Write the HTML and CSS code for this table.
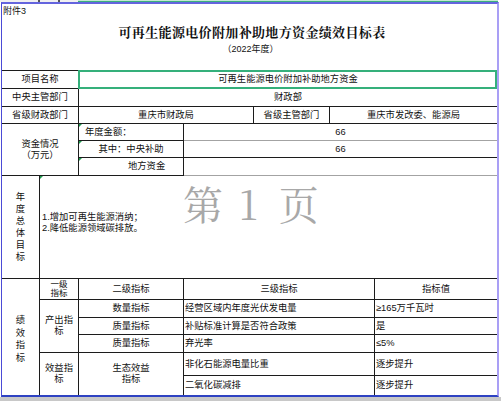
FILE: index.html
```html
<!DOCTYPE html>
<html lang="zh-CN">
<head>
<meta charset="utf-8">
<title>可再生能源电价附加补助地方资金绩效目标表</title>
<link rel="stylesheet" href="styles.css">
</head>
<body>
<div class="topbar">
  <div class="tb-left"><span class="tick t1"></span><span class="tick t2"></span></div>
  <div class="tb-right"></div>
</div>
<div class="frame">
  <div class="head">
    <div class="note">附件3</div>
    <div class="title">可再生能源电价附加补助地方资金绩效目标表</div>
    <div class="year">（2022年度）</div>
  </div>
  <div class="grid">
    <div class="c s2">项目名称</div>
    <div class="c s5 sel">可再生能源电价附加补助地方资金</div>

    <div class="c s2">中央主管部门</div>
    <div class="c s5">财政部</div>

    <div class="c s2">省级财政部门</div>
    <div class="c s2">重庆市财政局</div>
    <div class="c">省级主管部门</div>
    <div class="c s2">重庆市发改委、能源局</div>

    <div class="c s2 r3 two">资金情况<br>（万元）</div>
    <div class="c l tri amt">年度金额：</div>
    <div class="c s4 gb">66</div>
    <div class="c tri">其中：中央补助</div>
    <div class="c s4">66</div>
    <div class="c l tri local">地方资金</div>
    <div class="c s4 gb"></div>

    <div class="c"><span class="stack">年度总体目标</span></div>
    <div class="c s6 goal tri">
      <div class="goal-text">1.增加可再生能源消纳；<br>2.降低能源领域碳排放。</div>
      <div class="wm">第<span class="one">1</span>页</div>
    </div>

    <div class="c r6"><span class="stack perf">绩效指标</span></div>
    <div class="c small">一级<br>指标</div>
    <div class="c">二级指标</div>
    <div class="c s3">三级指标</div>
    <div class="c">指标值</div>

    <div class="c r3 two">产出指<br>标</div>
    <div class="c">数量指标</div>
    <div class="c s3 l">经营区域内年度光伏发电量</div>
    <div class="c l">≥165万千瓦时</div>

    <div class="c">质量指标</div>
    <div class="c s3 l">补贴标准计算是否符合政策</div>
    <div class="c l">是</div>

    <div class="c">质量指标</div>
    <div class="c s3 l">弃光率</div>
    <div class="c l">≤5%</div>

    <div class="c r2 two">效益指<br>标</div>
    <div class="c r2 two">生态效益<br>指标</div>
    <div class="c s3 l">非化石能源电量比重</div>
    <div class="c l">逐步提升</div>

    <div class="c s3 l">二氧化碳减排</div>
    <div class="c l">逐步提升</div>
  </div>
</div>
<div class="status"></div>
</body>
</html>
```
FILE: styles.css
```css
html, body {
  margin: 0;
  padding: 0;
  background: #ffffff;
}
body {
  width: 501px;
  height: 401px;
  overflow: hidden;
  font-family: "Liberation Sans", "Noto Sans CJK SC", sans-serif;
  font-size: 9.3px;
  color: #111111;
}

/* top column-header strip */
.topbar {
  display: flex;
  height: 2px;
}
.tb-left {
  width: 78px;
  background: #f0f0f0;
  display: flex;
}
.tick {
  width: 2px;
  height: 2px;
  background: #555555;
}
.t1 { margin-left: 38px; }
.t2 { margin-left: 18px; }
.tb-right {
  width: 420px;
  border-top: 1px solid #c4e8d4;
  background: #3cb07c;
  height: 1px;
}

/* sheet frame */
.frame {
  margin-left: 1px;
  width: 495px;
  border-left: 1px solid #4b4bd6;
  border-right: 2px solid #a99ff5;
  border-top: 2px solid #6464de;
  border-bottom: 2px solid #2e42c2;
}

.head {
  height: 66px;
}
.note {
  font-size: 9px;
  line-height: 14px;
  padding-left: 1px;
}
.title {
  margin-top: 5px;
  line-height: 18px;
  font-size: 13px;
  font-weight: bold;
  letter-spacing: 0.35px;
  text-align: center;
  padding-left: 5px;
  font-family: "Noto Serif CJK SC", "Noto Sans CJK SC", serif;
}
.year {
  margin-top: 2px;
  line-height: 12px;
  font-size: 9px;
  text-align: center;
  padding-left: 2px;
}

/* table grid */
.grid {
  display: grid;
  grid-template-columns: 37px 38px 104px 69px 75px 44px 122px;
  grid-template-rows: 17px 17px 16px 16px 16px 17px 102px 20px 17px 16px 17px 22px 19px;
  gap: 1px;
  padding-top: 1px;
  background: #1c1c1c;
}
.c {
  background: #ffffff;
  display: flex;
  align-items: center;
  justify-content: center;
  text-align: center;
  white-space: nowrap;
  line-height: 11px;
  overflow: visible;
}
.s2 { grid-column: span 2; }
.s3 { grid-column: span 3; }
.s4 { grid-column: span 4; }
.s5 { grid-column: span 5; }
.s6 { grid-column: span 6; }
.r2 { grid-row: span 2; }
.r3 { grid-row: span 3; }
.r6 { grid-row: span 6; }

.l {
  justify-content: flex-start;
  text-align: left;
  padding-left: 1px;
}
.amt { padding-left: 6px; }
.local { padding-left: 49px; }
.two { line-height: 11px; }
.small {
  font-size: 8.5px;
  line-height: 9px;
}
.gb { box-shadow: 0 1px 0 #a3a3a3; }

.stack {
  display: block;
  width: 1em;
  white-space: normal;
  word-break: break-all;
  line-height: 12px;
}
.perf {
  line-height: 12.5px;
  padding-top: 4px;
}

/* selection box */
.sel { position: relative; }
.sel::after {
  content: "";
  position: absolute;
  left: -1px;
  top: -1px;
  right: 0;
  bottom: -1px;
  border: 2px solid #35b07b;
}

/* green error triangles */
.tri { position: relative; }
.tri::before {
  content: "";
  position: absolute;
  left: 0;
  top: 0;
  border-top: 3px solid #1f9b4f;
  border-right: 3px solid transparent;
}

/* goal cell */
.goal {
  position: relative;
  justify-content: flex-start;
  text-align: left;
  padding-left: 2px;
  padding-bottom: 8px;
  box-sizing: border-box;
}
.goal-text {
  line-height: 11px;
}
.wm {
  position: absolute;
  left: 143px;
  top: 7px;
  font-size: 40px;
  line-height: 40px;
  color: #a8a8a8;
  font-family: "Noto Serif CJK SC", "Liberation Serif", "Noto Sans CJK SC", serif;
  white-space: nowrap;
  pointer-events: none;
}
.wm .one {
  margin: 0 21px 0 16px;
}

.status {
  height: 10px;
  background: #c8c8c8;
}
```
